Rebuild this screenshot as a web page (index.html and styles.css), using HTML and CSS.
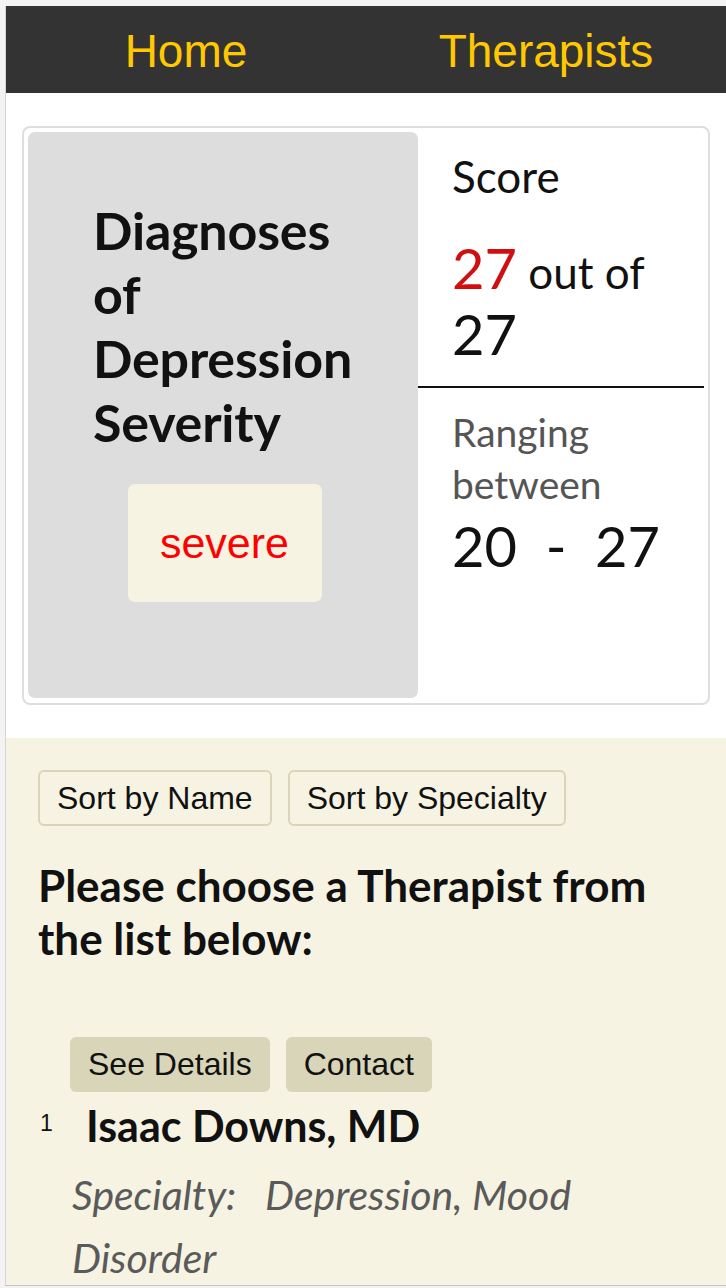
FILE: index.html
```html
<!DOCTYPE html>
<html lang="en">
<head>
<meta charset="utf-8">
<title>Depression Severity</title>
<link rel="stylesheet" href="styles.css">
</head>
<body>
<div class="page">
  <nav class="nav">
    <a class="nav-link" href="#">Home</a>
    <a class="nav-link" href="#">Therapists</a>
  </nav>

  <section class="result-card">
    <div class="diagnosis">
      <h1 class="diagnosis-title">Diagnoses of Depression Severity</h1>
      <div class="severity-badge">severe</div>
    </div>
    <div class="score-col">
      <div class="score-top">
        <div class="score-label">Score</div>
        <p class="score-value"><span class="big red">27</span> out of <span class="big">27</span></p>
      </div>
      <div class="score-bottom">
        <div class="range-label">Ranging between</div>
        <div class="range-value">20&nbsp; -&nbsp; 27</div>
      </div>
    </div>
  </section>

  <section class="therapists">
    <div class="sort-row">
      <button class="sort-btn">Sort by Name</button>
      <button class="sort-btn">Sort by Specialty</button>
    </div>
    <h2 class="choose-title">Please choose a Therapist from the list below:</h2>

    <div class="therapist">
      <div class="actions">
        <button class="action-btn">See Details</button>
        <button class="action-btn">Contact</button>
      </div>
      <div class="name-row">
        <span class="num">1</span>
        <h3 class="name">Isaac Downs, MD</h3>
      </div>
      <p class="specialty">Specialty:&nbsp;&nbsp; Depression, Mood Disorder</p>
    </div>
  </section>
</div>
</body>
</html>
```

FILE: styles.css
```css
* { box-sizing: border-box; }

html, body { height: 100%; }

body {
  margin: 0;
  background: #f3f3f3;
  padding: 6px 0 2px 5px;
  display: flex;
  flex-direction: column;
  font-family: "Lato", "Liberation Sans", sans-serif;
  color: #111;
}

.page {
  flex: 1;
  overflow: hidden;
  background: #fff;
  border-left: 1px solid #d4d4d4;
  border-bottom: 1px solid #c4c4c4;
  display: flex;
  flex-direction: column;
}

.nav {
  flex: none;
  height: 87px;
  background: #333333;
  display: grid;
  grid-template-columns: 1fr 1fr;
  align-items: center;
}

.nav-link {
  font-family: "Liberation Sans", Arial, sans-serif;
  font-size: 46px;
  color: #ffc800;
  text-decoration: none;
  text-align: center;
  line-height: 1;
  margin-top: 3px;
}

.result-card {
  flex: none;
  margin: 33px 16px 33px 16px;
  border: 2px solid #dedede;
  border-radius: 8px;
  padding: 4px 4px 5px 4px;
  display: flex;
}

.diagnosis {
  width: 390px;
  flex: none;
  background: #dddddd;
  border-radius: 7px;
  padding: 66px 60px 96px 65px;
  display: flex;
  flex-direction: column;
  align-items: flex-start;
}

.diagnosis-title {
  margin: 0;
  font-size: 52px;
  line-height: 64px;
  font-weight: 700;
  color: #111;
  letter-spacing: -0.2px;
}

.severity-badge {
  align-self: center;
  margin: 30px 0 0 -2px;
  width: 194px;
  height: 118px;
  background: #f6f3e3;
  border-radius: 7px;
  display: flex;
  align-items: center;
  justify-content: center;
  font-family: "Liberation Sans", Arial, sans-serif;
  font-size: 43px;
  color: #ff0000;
}

.score-col {
  flex: 1;
  display: flex;
  flex-direction: column;
}

.score-top {
  padding: 18px 20px 17px 34px;
  border-bottom: 2px solid #111;
}

.score-label {
  font-size: 44px;
  line-height: 1.2;
}

.score-value {
  margin: 34px 0 0;
  font-size: 44px;
  line-height: 62px;
}

.big { font-size: 56px; }
.red { color: #d01010; }

.score-bottom {
  padding: 18px 20px 0 34px;
}

.range-label {
  font-size: 39px;
  line-height: 52px;
  color: #555;
}

.range-value {
  margin-top: 2px;
  font-size: 56px;
  line-height: normal;
}

.therapists {
  flex: 1;
  background: #f6f3e3;
  padding: 32px 32px 0 32px;
}

.sort-row {
  display: flex;
  gap: 16px;
}

.sort-btn {
  font-family: "Liberation Sans", Arial, sans-serif;
  font-size: 32px;
  line-height: 36px;
  padding: 8px 17px;
  background: #f6f3e3;
  border: 2px solid #d9d5b8;
  border-radius: 6px;
  color: #111;
}

.choose-title {
  margin: 33px 0 0;
  font-size: 44px;
  line-height: 1.2;
  font-weight: 700;
}

.therapist {
  margin-top: 72px;
}

.actions {
  display: flex;
  gap: 16px;
  margin-left: 32px;
}

.action-btn {
  font-family: "Liberation Sans", Arial, sans-serif;
  font-size: 32px;
  line-height: 37px;
  padding: 9px 18px;
  background: #d9d5b8;
  border: none;
  border-radius: 6px;
  color: #111;
}

.name-row {
  display: flex;
  align-items: flex-start;
  margin-top: 8px;
}

.num {
  width: 48px;
  padding-left: 2px;
  margin-top: 10px;
  font-family: "Liberation Sans", Arial, sans-serif;
  font-size: 23px;
}

.name {
  margin: 0;
  font-size: 43px;
  line-height: 1.2;
  font-weight: 700;
}

.specialty {
  margin: 12px 40px 0 34px;
  font-size: 41px;
  line-height: 63px;
  font-style: italic;
  color: #5a5a5a;
}
```
